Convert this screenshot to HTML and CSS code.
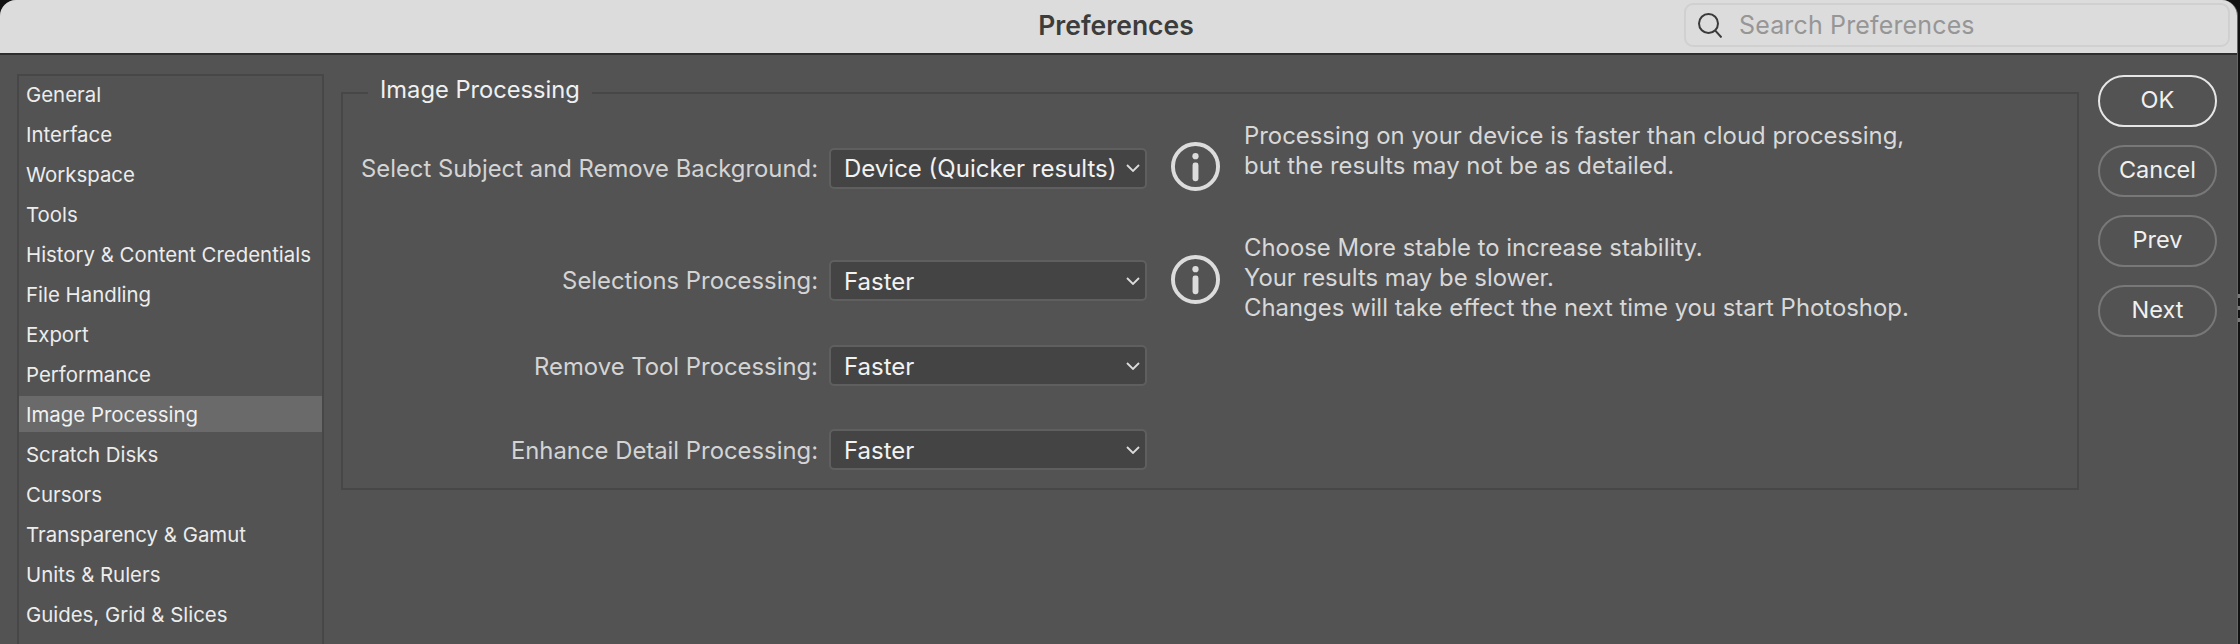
FILE: index.html
```html
<!DOCTYPE html>
<html lang="en">
<head>
<meta charset="utf-8">
<title>Preferences</title>
<link rel="stylesheet" href="styles.css">
</head>
<body>
<div class="window">
  <header class="titlebar">
    <h1 class="title">Preferences</h1>
    <div class="search">
      <svg class="search-icon" viewBox="0 0 24 25" aria-hidden="true"><circle cx="10.5" cy="10.5" r="9.5" /><path d="M17.3 17.6 L23.5 24.5" /></svg>
      <span>Search Preferences</span>
    </div>
  </header>
  <main class="content">
    <nav class="sidebar">
      <a class="item">General</a>
      <a class="item">Interface</a>
      <a class="item">Workspace</a>
      <a class="item">Tools</a>
      <a class="item">History &amp; Content Credentials</a>
      <a class="item">File Handling</a>
      <a class="item">Export</a>
      <a class="item">Performance</a>
      <a class="item selected">Image Processing</a>
      <a class="item">Scratch Disks</a>
      <a class="item">Cursors</a>
      <a class="item">Transparency &amp; Gamut</a>
      <a class="item">Units &amp; Rulers</a>
      <a class="item">Guides, Grid &amp; Slices</a>
    </nav>
    <section class="group">
      <h2 class="legend">Image Processing</h2>
      <div class="row row-subject">
        <label class="label">Select Subject and Remove Background:</label>
        <div class="select"><span>Device (Quicker results)</span><svg class="chev" viewBox="0 0 14 8"><path d="M1 1 L7 7 L13 1"/></svg></div>
        <svg class="info" viewBox="0 0 50 50"><circle cx="25" cy="25" r="23"/><circle class="dot" cx="25" cy="14.5" r="3.2"/><rect class="dot" x="22" y="21" width="6" height="19" rx="2.5"/></svg>
        <p class="note">Processing on your device is faster than cloud processing,<br>but the results may not be as detailed.</p>
      </div>
      <div class="row row-selections">
        <label class="label">Selections Processing:</label>
        <div class="select"><span>Faster</span><svg class="chev" viewBox="0 0 14 8"><path d="M1 1 L7 7 L13 1"/></svg></div>
        <svg class="info" viewBox="0 0 50 50"><circle cx="25" cy="25" r="23"/><circle class="dot" cx="25" cy="14.5" r="3.2"/><rect class="dot" x="22" y="21" width="6" height="19" rx="2.5"/></svg>
        <p class="note">Choose More stable to increase stability.<br>Your results may be slower.<br>Changes will take effect the next time you start Photoshop.</p>
      </div>
      <div class="row row-remove">
        <label class="label">Remove Tool Processing:</label>
        <div class="select"><span>Faster</span><svg class="chev" viewBox="0 0 14 8"><path d="M1 1 L7 7 L13 1"/></svg></div>
      </div>
      <div class="row row-enhance">
        <label class="label">Enhance Detail Processing:</label>
        <div class="select"><span>Faster</span><svg class="chev" viewBox="0 0 14 8"><path d="M1 1 L7 7 L13 1"/></svg></div>
      </div>
    </section>
    <div class="actions">
      <button class="btn primary">OK</button>
      <button class="btn">Cancel</button>
      <button class="btn">Prev</button>
      <button class="btn">Next</button>
    </div>
  </main>
</div>
<div class="ticks"><i></i><i></i><i></i></div>
</body>
</html>
```
FILE: styles.css
```css
* { box-sizing: border-box; }
html, body { margin: 0; height: 644px; overflow: hidden; background: #121212; }
body { font-family: Inter, "Liberation Sans", sans-serif; position: relative; }
.window { width: 2238px; height: 644px; display: flex; flex-direction: column; overflow: hidden; background: #535353; border-right: 1px solid #666666; border-top-left-radius: 16px; border-top-right-radius: 16px; }
.titlebar {
  height: 55px; flex: none; background: #dcdcdc; border-bottom: 2px solid #2e2e2e;
  display: flex; align-items: flex-start; justify-content: flex-end; padding: 3px 7px 0 0;
  position: relative;
}
.title { position: absolute; left: 0; right: 5px; top: 10px; margin: 0; text-align: center; font-size: 26.5px; line-height: 30px; font-weight: 600; color: #3c3c3c; }
.search {
  width: 546px; height: 44px; border: 2px solid #d0d0d0; border-radius: 9px;
  display: flex; align-items: center; padding-left: 12px; gap: 17px;
  font-size: 25px; letter-spacing: 0.15px; color: #969696; position: relative;
}
.search-icon { width: 24px; height: 25px; flex: none; fill: none; stroke: #3a3a3a; stroke-width: 2; }
.content { flex: 1; display: flex; align-items: flex-start; padding: 19px 0 0 17px; }
.sidebar {
  width: 307px; height: 600px; flex: none; border: 2px solid #474747; margin-right: 17px;
}
.item { display: flex; height: 40px; align-items: center; padding-left: 7px; font-size: 20.4px; color: #ececec; white-space: nowrap; }
.item:first-child { margin-top: -2px; }
.selected { background: #6a6a6a; height: 36px; margin: 2px 0; color: #f0f0f0; }
.group {
  width: 1738px; height: 398px; flex: none; margin-top: 18px; border: 2px solid #474747;
  position: relative;
}
.legend { position: absolute; left: 25px; top: -20px; margin: 0; padding: 0 12px; background: #535353; font-size: 23.7px; line-height: 32px; font-weight: 400; color: #f0f0f0; white-space: nowrap; }
.row { display: flex; align-items: center; position: relative; }
.label { width: 475px; flex: none; text-align: right; font-size: 23.85px; color: #d4d4d4; white-space: nowrap; }
.select {
  width: 318px; height: 41px; flex: none; margin-left: 11px; background: #444444; border: 2px solid #5f5f5f; border-radius: 5px;
  display: flex; align-items: center; justify-content: space-between; padding: 0 5px 0 13px; font-size: 24px; color: #f2f2f2; white-space: nowrap;
}
.select span { padding-top: 1px; }
.chev { width: 14px; height: 8px; flex: none; fill: none; stroke: #dcdcdc; stroke-width: 1.8; }
.info { width: 49px; height: 49px; flex: none; margin-left: 24px; fill: none; }
.info circle { stroke: #dcdcdc; stroke-width: 4; }
.info .dot { fill: #dcdcdc; stroke: none; }
.note { margin: 0 0 0 24px; font-size: 23.9px; line-height: 30px; color: #d8d8d8; white-space: nowrap; }
.row-subject { margin-top: 44px; height: 60px; }
.row-subject .info { margin-bottom: 3px; }
.row-subject .note { margin-bottom: 34px; }
.row-selections { margin-top: 37px; height: 91px; }
.row-selections .info { margin-bottom: 2px; }
.row-selections .note { margin-bottom: 6px; }
.row-remove { margin-top: 19px; height: 41px; }
.row-enhance { margin-top: 43px; height: 41px; }
.row-remove .label, .row-enhance .label { padding-top: 1px; }
.actions { display: flex; flex-direction: column; gap: 18px; flex: none; margin-left: 19px; width: 119px; padding-top: 1px; }
.btn {
  width: 119px; height: 52px; border-radius: 26px; background: transparent; border: 2px solid #787878; font: 400 23.5px Inter, "Liberation Sans", sans-serif; color: #f0f0f0; padding: 0 0 4px;
}
.primary { border-color: #e6e6e6; }
.ticks { position: absolute; left: 2238px; top: 294px; width: 2px; display: flex; flex-direction: column; gap: 8px; }
.ticks i { display: block; height: 4px; background: #777777; }
```
